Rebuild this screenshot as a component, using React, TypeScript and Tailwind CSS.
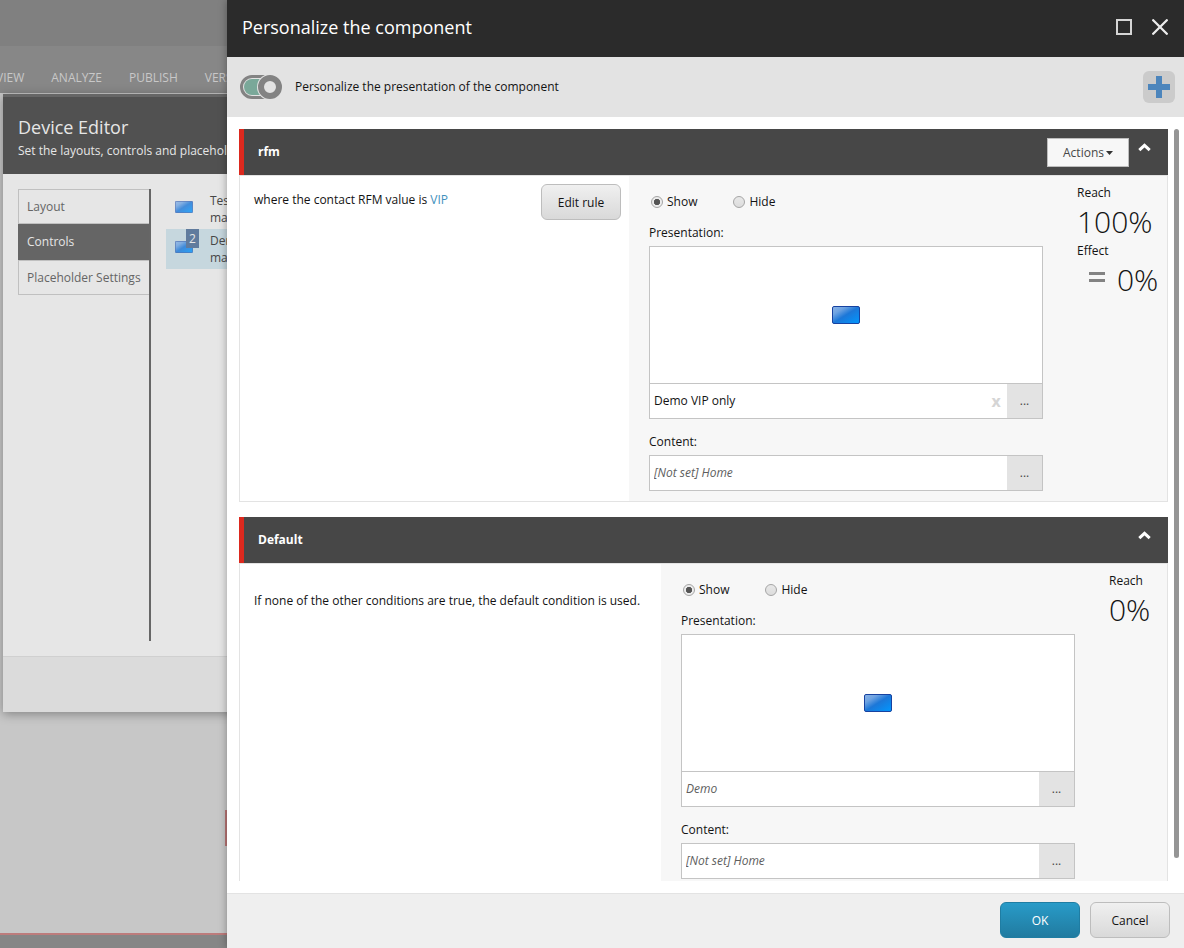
import { useId, useState } from 'react'
import { clsx } from 'clsx'

const ribbonTabs = ['VIEW', 'ANALYZE', 'PUBLISH', 'VERSIONS']
const editorTabs = ['Layout', 'Controls', 'Placeholder Settings']

function RenderingIcon({ className }: { className?: string }) {
    const id = useId()
    return (
        <svg viewBox="0 0 28 18" className={className} aria-hidden="true" preserveAspectRatio="none">
            <defs>
                <linearGradient id={id} x1="0" y1="0" x2="1" y2="1">
                    <stop offset="0" stopColor="#8db4e6" />
                    <stop offset="0.25" stopColor="#6ea3e2" />
                    <stop offset="0.5" stopColor="#1c77d8" />
                    <stop offset="1" stopColor="#0098ff" />
                </linearGradient>
            </defs>
            <rect x="0.5" y="0.5" width="27" height="17" rx="1.5" fill={`url(#${id})`} stroke="#1742a0" />
        </svg>
    )
}

function PushButton({ children, primary }: { children: string; primary?: boolean }) {
    return (
        <button
            className={clsx(
                'h-9 w-20 shrink-0 rounded-md border bg-linear-to-b pt-[2px] text-xs',
                primary
                    ? 'border-[#1f7da3] from-[#289bc8] to-[#217ba0] text-white'
                    : 'border-[#bdbdbd] from-[#f0f0f0] to-[#d9d9d9] text-[#131313]'
            )}
        >
            {children}
        </button>
    )
}

function Field({ id, value, muted, clearable }: { id: string; value: string; muted?: boolean; clearable?: boolean }) {
    return (
        <div className="flex h-9 border border-[#c4c4c4] bg-white">
            <input
                id={id}
                type="text"
                defaultValue={value}
                className={clsx('min-w-0 flex-1 px-1 text-xs outline-none', muted ? 'italic text-[#5e5e5e]' : 'text-[#131313]')}
            />
            {clearable && (
                <button className="w-[22px] text-base font-bold leading-4 text-[#d5d5d5]" aria-label="Clear">x</button>
            )}
            <button className="w-[35px] bg-[#e3e3e3] text-xs text-[#474747]" aria-label="Browse">...</button>
        </div>
    )
}

function ShowHide() {
    const name = useId()
    return (
        <div className="flex h-5 items-center gap-[34px]">
            {['Show', 'Hide'].map((label, i) => (
                <label key={label} className="flex items-center gap-1">
                    <input
                        type="radio"
                        name={name}
                        defaultChecked={i === 0}
                        className="ml-[2px] size-3 appearance-none rounded-full border border-[#a5a5a5] bg-linear-to-b from-[#e8e8e8] to-[#dcdcdc] checked:bg-radial checked:from-[#555] checked:from-40% checked:to-[#ececec] checked:to-50%"
                    />
                    {label}
                </label>
            ))}
        </div>
    )
}

function Metric({ label, value, effect }: { label: string; value: string; effect?: boolean }) {
    return (
        <div>
            <div className="h-[18px] leading-[18px]">{label}</div>
            <div className="flex h-10 items-center text-[30px] font-light leading-10">
                {effect && (
                    <span className="mr-3 ml-3 flex w-4 flex-col gap-1 pb-[6px]">
                        <span className="h-[3px] bg-[#838383]" />
                        <span className="h-[3px] bg-[#838383]" />
                    </span>
                )}
                {value}
            </div>
        </div>
    )
}

interface ConditionProps {
    title: string
    rule: React.ReactNode
    presentation: string
    isDefault?: boolean
    reach: string
    effect?: string
}

function Condition({ title, rule, presentation, isDefault, reach, effect }: ConditionProps) {
    const [open, setOpen] = useState(true)
    const id = useId()

    return (
        <section className="mb-[15px] shrink-0">
            <header className="flex h-[46px] items-center border-l-[5px] border-[#dc291e] bg-[#474747] pl-[14px] pr-[17px] text-white">
                <h2 className="flex-1 text-xs font-bold">{title}</h2>
                {!isDefault && (
                    <button className="mr-[9px] flex h-[29px] w-[82px] items-center justify-center border border-[#bdbdbd] bg-[#f7f7f7] pt-[2px] text-xs text-[#474747]">
                        Actions
                        <svg viewBox="0 0 7 4" className="ml-[2px] w-[7px]" aria-hidden="true">
                            <path d="M0 0h7L3.5 4z" fill="#333" />
                        </svg>
                    </button>
                )}
                <button onClick={() => setOpen(!open)} className="mb-[10px] w-[13px]" aria-label="Toggle section">
                    <svg viewBox="0 0 13 9" fill="none" className={clsx('w-full', !open && 'rotate-180')}>
                        <path d="M1.3 7.2 6.5 2.3l5.2 4.9" stroke="#fff" strokeWidth="3" />
                    </svg>
                </button>
            </header>
            {open && (
                <div className="flex border border-[#e3e3e3]">
                    <div className={clsx('flex flex-1 justify-between bg-white pl-[14px]', isDefault ? 'pt-7' : 'pr-2 pt-2')}>
                        <p className={clsx('leading-[18px]', !isDefault && 'pt-[7px]')}>{rule}</p>
                        {!isDefault && <PushButton>Edit rule</PushButton>}
                    </div>
                    <div className="flex bg-[#f7f7f7] pl-5">
                        <div className="w-[394px] pb-[10px] pt-4">
                            <ShowHide />
                            <label htmlFor={`${id}p`} className="mt-[11px] block h-5 leading-5">Presentation:</label>
                            <div className="mt-[3px] flex h-[137px] items-center justify-center border border-b-0 border-[#c4c4c4] bg-white">
                                <RenderingIcon className="h-[18px] w-7" />
                            </div>
                            <Field id={`${id}p`} value={presentation} muted={isDefault} clearable={!isDefault} />
                            <label htmlFor={`${id}c`} className="mt-[13px] block h-5 leading-5">Content:</label>
                            <div className="mt-[3px]">
                                <Field id={`${id}c`} value="[Not set] Home" muted />
                            </div>
                        </div>
                        <div className={clsx('ml-[34px] pt-2', isDefault ? 'w-[58px]' : 'w-[90px]')}>
                            <Metric label="Reach" value={reach} />
                            {effect && <Metric label="Effect" value={effect} effect />}
                        </div>
                    </div>
                </div>
            )}
        </section>
    )
}

function DeviceEditor() {
    return (
        <div className="absolute left-[3px] top-[94px] flex h-[618px] w-[640px] flex-col bg-[#e6e6e6] shadow-[0_2px_10px_rgba(0,0,0,0.35)]">
            <header className="h-20 border-t-[3px] border-[#666] bg-[#515151] pl-[15px] pt-[18px] text-[#e6e6e6]">
                <h2 className="text-lg leading-6">Device Editor</h2>
                <p className="leading-6">Set the layouts, controls and placeholders</p>
            </header>
            <div className="flex flex-1 gap-[15px] px-[15px] py-[15px]">
                <div className="w-[133px] border-r-2 border-[#666]">
                    {editorTabs.map((tab) => (
                        <button
                            key={tab}
                            className={clsx(
                                'block w-full whitespace-nowrap pl-2 text-left text-xs',
                                tab === 'Controls'
                                    ? 'h-9 border-l border-[#656565] bg-[#656565] text-[#e6e6e6]'
                                    : 'h-[35px] border border-r-0 border-[#c0c0c0] text-[#656565]'
                            )}
                        >
                            {tab}
                        </button>
                    ))}
                </div>
                <ul className="flex-1 text-[#474747]">
                    {['Test', 'Demo'].map((item, i) => (
                        <li key={item} className={clsx('flex h-10 gap-4 pl-[9px] pt-[3px]', i === 1 && 'bg-[#c6d7de]')}>
                            <span className="relative h-[21px] w-[19px] pt-[9px]">
                                <RenderingIcon className="h-3 w-[18px] opacity-80" />
                                {i === 1 && (
                                    <span className="absolute -top-[3px] left-[11px] flex h-[19px] w-[13px] items-center justify-center bg-[#607b9d] text-[#e6e6e6]">
                                        2
                                    </span>
                                )}
                            </span>
                            <span className="leading-[17px]">
                                {item}
                                <br />
                                main
                            </span>
                        </li>
                    ))}
                </ul>
            </div>
            <footer className="h-14 border-t border-[#d0d0d0] bg-[#dbdbdb]" />
        </div>
    )
}

function PersonalizeDialog() {
    const [enabled, setEnabled] = useState(true)

    return (
        <div role="dialog" aria-label="Personalize the component" className="absolute inset-y-0 left-[227px] right-0 flex flex-col bg-white text-[#131313] shadow-[0_0_8px_rgba(0,0,0,0.35)]">
            <header className="flex h-[57px] shrink-0 items-center gap-5 bg-[#2b2b2b] pb-[3px] pl-[15px] pr-4 text-white">
                <h1 className="flex-1 text-lg">Personalize the component</h1>
                <button aria-label="Maximize">
                    <svg viewBox="0 0 16 16" className="size-4">
                        <rect x="1" y="1" width="14" height="14" fill="none" stroke="#d5d5d5" strokeWidth="2" />
                    </svg>
                </button>
                <button aria-label="Close">
                    <svg viewBox="0 0 16 16" className="size-4">
                        <path d="M1.2 1.2l13.6 13.6M14.8 1.2L1.2 14.8" stroke="#ececec" strokeWidth="2.3" strokeLinecap="round" />
                    </svg>
                </button>
            </header>

            <div className="flex h-[60px] shrink-0 items-center bg-[#e3e3e3] pl-[13px] pr-[9px]">
                <label className="flex flex-1 items-center gap-[13px]">
                    <input type="checkbox" className="sr-only" checked={enabled} onChange={(e) => setEnabled(e.target.checked)} />
                    <svg viewBox="0 0 42 24" className={clsx('h-6 w-[42px]', !enabled && '-scale-x-100')} aria-hidden="true">
                        <rect x="1.5" y="1.5" width="36" height="21" rx="10.5" fill="#e3e3e3" stroke="#838383" strokeWidth="3" />
                        <rect x="4" y="4" width="32" height="16" rx="8" fill={enabled ? '#7aa899' : '#bdbdbd'} />
                        <circle cx="30" cy="12" r="13" fill="#e3e3e3" />
                        <circle cx="30" cy="12" r="9" fill="none" stroke="#838383" strokeWidth="6" />
                    </svg>
                    Personalize the presentation of the component
                </label>
                <button aria-label="Add condition" className="flex size-8 items-center justify-center rounded-md bg-[#cbcbcb]">
                    <svg viewBox="0 0 22 22" className="size-[22px]">
                        <path d="M8 0h6v8h8v6h-8v8H8v-8H0V8h8z" fill="#4c85bc" />
                    </svg>
                </button>
            </div>

            <main className="flex min-h-0 flex-1 gap-[6px] py-3 pl-3 pr-[5px]">
                <div className="flex flex-1 flex-col overflow-hidden">
                    <Condition
                        title="rfm"
                        rule={<>where the contact RFM value is <a href="#vip" className="text-[#3f91bd]">VIP</a></>}
                        presentation="Demo VIP only"
                        reach="100%"
                        effect="0%"
                    />
                    <Condition
                        title="Default"
                        rule="If none of the other conditions are true, the default condition is used."
                        presentation="Demo"
                        isDefault
                        reach="0%"
                    />
                </div>
                <div className="h-[97%] w-[5px] rounded-full bg-[#959595]" />
            </main>

            <footer className="flex h-[55px] shrink-0 items-start justify-end gap-[10px] border-t border-[#e3e3e3] bg-[#efefef] pr-[14px] pt-2">
                <PushButton primary>OK</PushButton>
                <PushButton>Cancel</PushButton>
            </footer>
        </div>
    )
}

export default function App() {
    return (
        <div className="relative flex h-screen flex-col overflow-hidden bg-[#c7c7c7] font-['Open_Sans',sans-serif] text-xs">
            <div className="h-[46px] shrink-0 bg-[#808080]" />
            <nav className="flex h-12 shrink-0 items-center gap-[27px] border-b border-[#c7c7c7] bg-[#878787] pt-4 text-[#c8c8c8]">
                {ribbonTabs.map((tab) => (
                    <a key={tab} href="#ribbon" className="first:-ml-1">{tab}</a>
                ))}
            </nav>
            <div className="flex flex-1 flex-col items-start pt-[716px]">
                <div className="ml-[225px] h-9 w-1 bg-[#b87575]" />
            </div>
            <div className="h-[15px] shrink-0 border-t-2 border-[#bd7c7c] bg-[#868686]" />
            <DeviceEditor />
            <PersonalizeDialog />
        </div>
    )
}
